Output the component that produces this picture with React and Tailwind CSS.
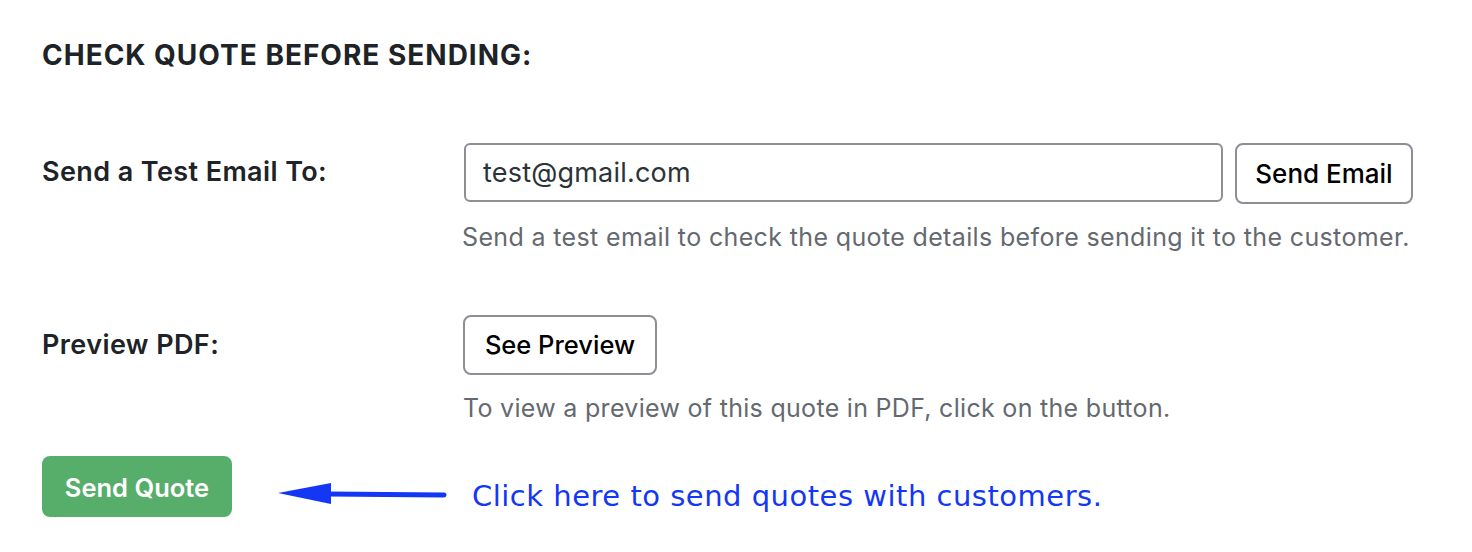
export default function App() {
  return (
    <div
      className="w-[1472px] h-[552px] bg-white pl-[42px] pt-[39px] text-[#1d2327]"
      style={{ fontFamily: "Inter, 'Noto Sans', sans-serif" }}
    >
      <h2 className="text-[28px] leading-[32px] font-bold tracking-[1px]">CHECK QUOTE BEFORE SENDING:</h2>

      {/* test email */}
      <div className="mt-[72px] flex">
        <div className="w-[420px] h-[59px] flex items-center text-[27px] font-semibold tracking-[0.4px]">
          Send a Test Email To:
        </div>
        <div>
          <div className="flex items-start gap-[12px]">
            <input
              type="text"
              defaultValue="test@gmail.com"
              className="ml-[2px] w-[759px] h-[59px] rounded-[6px] border-2 border-[#8c8f94] px-[17px] text-[27px] tracking-[0.2px] text-[#2c3338] outline-none"
            />
            <button className="h-[61px] w-[178px] rounded-[8px] border-2 border-[#8c8f94] bg-white text-[26px] font-medium text-black">
              Send Email
            </button>
          </div>
          <p className="mt-[18px] text-[25px] leading-[30px] tracking-[0.36px] text-[#646970]">
            Send a test email to check the quote details before sending it to the customer.
          </p>
        </div>
      </div>

      {/* preview */}
      <div className="mt-[63px] flex">
        <div className="w-[421px] h-[60px] flex items-center text-[27px] font-semibold tracking-[0.4px]">
          Preview PDF:
        </div>
        <div>
          <button className="h-[60px] w-[194px] rounded-[8px] border-2 border-[#8c8f94] bg-white text-[25.5px] font-medium text-black">
            See Preview
          </button>
          <p className="mt-[18px] text-[25px] leading-[30px] tracking-[0.3px] text-[#646970]">
            To view a preview of this quote in PDF, click on the button.
          </p>
        </div>
      </div>

      {/* send */}
      <div className="mt-[33px] flex items-start">
        <button className="h-[61px] w-[190px] rounded-[8px] bg-[#57ae6b] pt-[3px] text-[25.5px] font-semibold text-white">
          Send Quote
        </button>
        <svg width="172" height="30" viewBox="0 0 172 30" className="ml-[46px] mt-[22px]">
          <path d="M0 15 L53 5 L53 26 Z" fill="#1337f5" />
          <path d="M50 16 L166 17" stroke="#1337f5" strokeWidth="5" strokeLinecap="round" fill="none" />
        </svg>
        <span
          className="ml-[22px] mt-[22px] text-[29px] leading-[36px] tracking-[0.5px] text-[#1337f5]"
          style={{ fontFamily: "'DejaVu Sans', Verdana, sans-serif" }}
        >
          Click here to send quotes with customers.
        </span>
      </div>
    </div>
  );
}
